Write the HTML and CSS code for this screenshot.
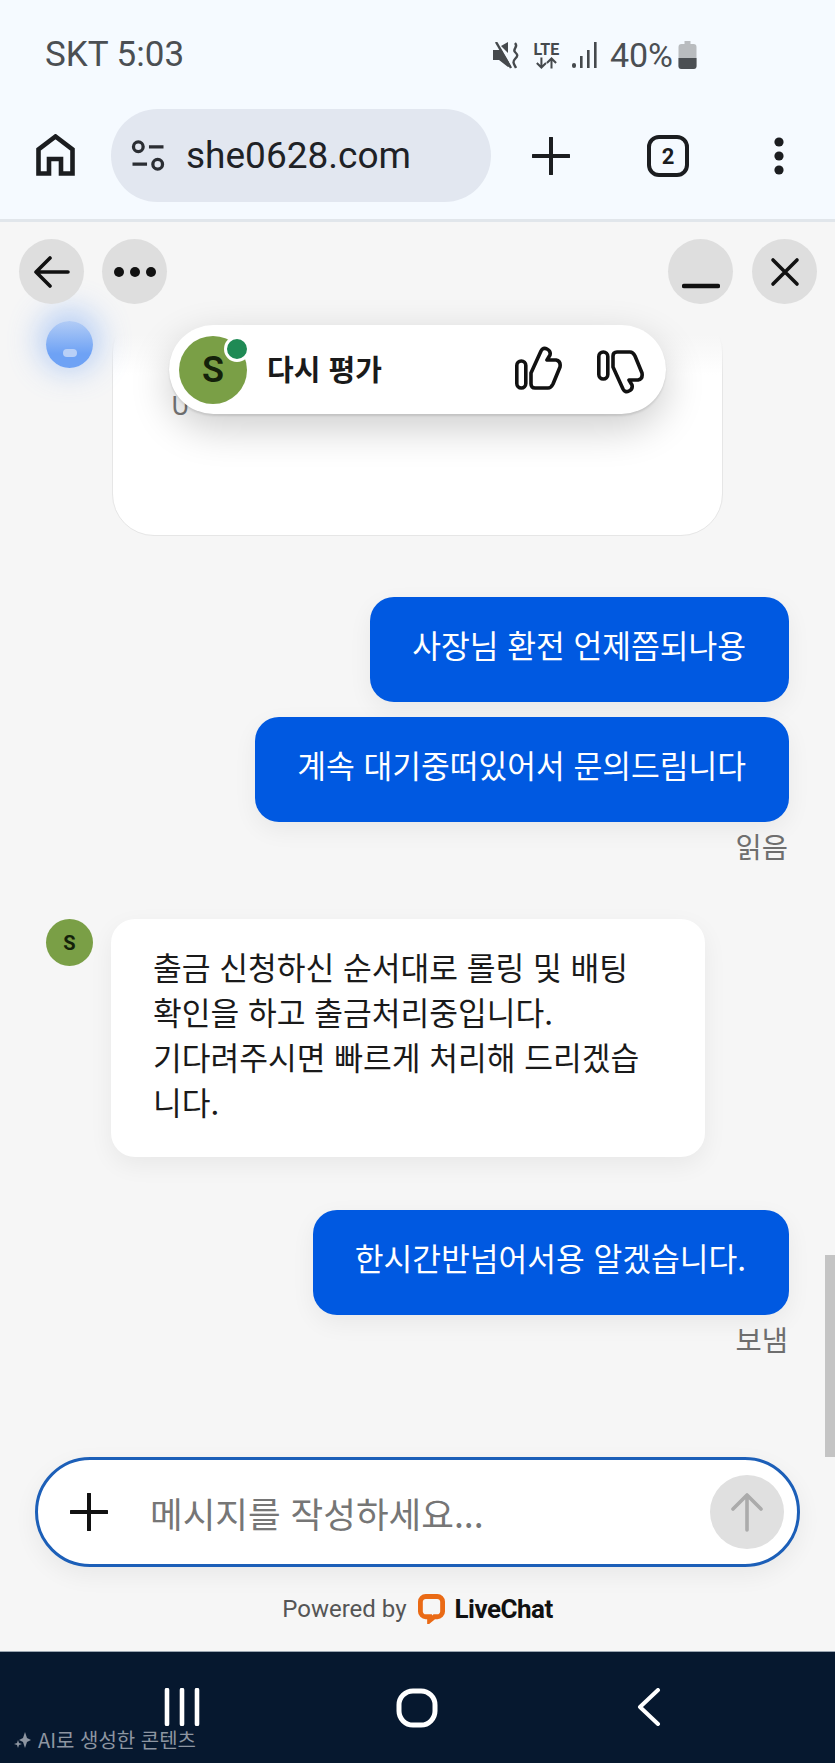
FILE: index.html
```html
<!DOCTYPE html>
<html lang="ko">
<head>
<meta charset="UTF-8">
<meta name="viewport" content="width=device-width, initial-scale=1.0">
<title>LiveChat</title>
<link rel="stylesheet" href="styles.css">
</head>
<body>

<div class="phone">
    <!-- Android status bar -->
    <header class="status-bar">
        <span class="status-left">SKT 5:03</span>
        <div class="status-right">
            <svg class="icon-mute" viewBox="0 0 27 27">
                <path d="M0 8h6l2-1 10 17-3 1-9-7H0z" fill="#45494d"/>
                <path d="M8 4l7-4v11z" fill="#45494d"/>
                <path d="M3 0l15 26" stroke="#45494d" stroke-width="2.4"/>
                <path d="M22 1c4 4-3 6 0 9s3 4 0 7-1 5 1 9" fill="none" stroke="#45494d" stroke-width="2.4"/>
            </svg>
            <div class="lte">
                <span class="lte-text">LTE</span>
                <svg viewBox="0 0 24 12" class="lte-arrows">
                    <path d="M7 0v11M2 6l5 5 5-5" fill="none" stroke="#45494d" stroke-width="2.2"/>
                    <path d="M18 12V1M13 6l5-5 5 5" fill="none" stroke="#45494d" stroke-width="2.2"/>
                </svg>
            </div>
            <svg class="icon-signal" viewBox="0 0 25 26">
                <rect x="0" y="21" width="4" height="5" rx="2" fill="#45494d"/>
                <rect x="8" y="14" width="2.6" height="12" fill="#45494d"/>
                <rect x="15" y="8" width="2.6" height="18" fill="#45494d"/>
                <rect x="22" y="0" width="2.6" height="26" fill="#45494d"/>
            </svg>
            <span class="battery-text">40%</span>
            <svg class="icon-battery" viewBox="0 0 18 28">
                <path d="M6 0h6v3h3a3 3 0 0 1 3 3v19a3 3 0 0 1-3 3H3a3 3 0 0 1-3-3V6a3 3 0 0 1 3-3h3z" fill="#b9bcbf"/>
                <path d="M0 17h18v8a3 3 0 0 1-3 3H3a3 3 0 0 1-3-3z" fill="#4b4f53"/>
            </svg>
        </div>
    </header>

    <!-- Browser toolbar -->
    <div class="browser-bar">
        <svg class="icon-home" viewBox="0 0 39 42">
            <path d="M2.5 39.5V15.5L19.5 2.5l17 13v24H25V25H13v14.5z" fill="none" stroke="#1b1d20" stroke-width="4.6"/>
        </svg>
        <div class="url-pill">
            <svg class="icon-tune" viewBox="0 0 34 32">
                <circle cx="7" cy="7" r="5" fill="none" stroke="#2b2e33" stroke-width="3.4"/>
                <path d="M18 7h15M1 25h15" stroke="#2b2e33" stroke-width="3.4"/>
                <circle cx="27" cy="25" r="5" fill="none" stroke="#2b2e33" stroke-width="3.4"/>
            </svg>
            <span class="url-text">she0628.com</span>
        </div>
        <svg class="icon-newtab" viewBox="0 0 38 38">
            <path d="M19 1v36M1 19h36" stroke="#1b1d20" stroke-width="4" stroke-linecap="round"/>
        </svg>
        <div class="tab-count">2</div>
        <svg class="icon-menu" viewBox="0 0 12 38">
            <circle cx="6" cy="5" r="4.6" fill="#1b1d20"/>
            <circle cx="6" cy="19" r="4.6" fill="#1b1d20"/>
            <circle cx="6" cy="33" r="4.6" fill="#1b1d20"/>
        </svg>
    </div>

    <!-- Chat window -->
    <main class="chat">
        <div class="chat-top">
            <div class="chat-top-group">
                <button class="round-btn">
                    <svg viewBox="0 0 36 32" class="btn-icon"><path d="M34 16H3M16 2L2 16l14 14" fill="none" stroke="#111" stroke-width="3.6" stroke-linecap="round" stroke-linejoin="round"/></svg>
                </button>
                <button class="round-btn">
                    <svg viewBox="0 0 44 12" class="btn-icon-wide"><circle cx="6" cy="6" r="5" fill="#111"/><circle cx="22" cy="6" r="5" fill="#111"/><circle cx="38" cy="6" r="5" fill="#111"/></svg>
                </button>
            </div>
            <div class="chat-top-group chat-top-right">
                <button class="round-btn">
                    <svg viewBox="0 0 38 6" class="btn-icon-min"><path d="M2 3h34" stroke="#111" stroke-width="4.4" stroke-linecap="round"/></svg>
                </button>
                <button class="round-btn">
                    <svg viewBox="0 0 30 30" class="btn-icon-x"><path d="M3 3l24 24M27 3L3 27" stroke="#111" stroke-width="3.6" stroke-linecap="round"/></svg>
                </button>
            </div>
        </div>

        <div class="top-fade"></div>

        <div class="rate-pill">
            <div class="rate-avatar">S<span class="online-dot"></span></div>
            <span class="rate-label">다시 평가</span>
            <svg class="icon-thumb" viewBox="0 0 47 44">
                <rect x="1.8" y="15" width="9" height="27" rx="4.5" fill="none" stroke="#111" stroke-width="3.6"/>
                <path d="M16 27L26 5q2-4 6-2t3 6l-3 5h9q5 1 4 7l-7 17q-2 4-5 4H20q-4 0-4-4z" fill="none" stroke="#111" stroke-width="3.6" stroke-linejoin="round"/>
            </svg>
            <svg class="icon-thumb icon-thumb-down" viewBox="0 0 47 44">
                <rect x="1.8" y="15" width="9" height="27" rx="4.5" fill="none" stroke="#111" stroke-width="3.6"/>
                <path d="M16 27L26 5q2-4 6-2t3 6l-3 5h9q5 1 4 7l-7 17q-2 4-5 4H20q-4 0-4-4z" fill="none" stroke="#111" stroke-width="3.6" stroke-linejoin="round"/>
            </svg>
        </div>

        <div class="messages">
            <div class="card-row">
                <div class="agent-glow"><span class="glow-dash"></span></div>
                <div class="card"><span class="card-text">U</span></div>
            </div>

            <div class="bubble bubble-me first">사장님 환전 언제쯤되나용</div>
            <div class="bubble bubble-me second">계속 대기중떠있어서 문의드림니다</div>
            <div class="msg-status">읽음</div>

            <div class="agent-row">
                <div class="agent-avatar">S</div>
                <div class="bubble bubble-agent">출금 신청하신 순서대로 롤링 및 배팅<br>확인을 하고 출금처리중입니다.<br>기다려주시면 빠르게 처리해 드리겠습<br>니다.</div>
            </div>

            <div class="bubble bubble-me third">한시간반넘어서용 알겠습니다.</div>
            <div class="msg-status">보냄</div>
        </div>

        <div class="scroll-thumb"></div>

        <div class="composer">
            <svg class="icon-plus" viewBox="0 0 38 38">
                <path d="M19 1v36M1 19h36" stroke="#111" stroke-width="4" stroke-linecap="round"/>
            </svg>
            <span class="placeholder">메시지를 작성하세요...</span>
            <div class="send-btn">
                <svg viewBox="0 0 34 40" class="icon-send"><path d="M17 38V3M3 17L17 3l14 14" fill="none" stroke="#ababab" stroke-width="3.6" stroke-linecap="round" stroke-linejoin="round"/></svg>
            </div>
        </div>

        <div class="powered">
            <span class="powered-by">Powered by</span>
            <svg class="lc-logo" viewBox="0 0 28 31">
                <path d="M8 2.5h12a5.500 5.500 0 0 1 5.500 5.500v10a5.500 5.500 0 0 1-5.500 5.500h-3l-5 4v-4H8a5.500 5.500 0 0 1-5.500-5.500V8A5.500 5.500 0 0 1 8 2.500z" fill="none" stroke="#ea6a15" stroke-width="5"/>
            </svg>
            <span class="lc-name">LiveChat</span>
        </div>
    </main>

    <!-- Android nav bar -->
    <footer class="nav-bar">
        <svg class="nav-recent" viewBox="0 0 36 38">
            <path d="M3 2v34M18 2v34M33 2v34" stroke="#fff" stroke-width="4.6" stroke-linecap="round"/>
        </svg>
        <svg class="nav-home" viewBox="0 0 42 40">
            <rect x="3" y="3" width="36" height="34" rx="14" fill="none" stroke="#fff" stroke-width="5"/>
        </svg>
        <svg class="nav-back" viewBox="0 0 24 38">
            <path d="M21 2L3 19l18 17" fill="none" stroke="#fff" stroke-width="4" stroke-linecap="round" stroke-linejoin="round"/>
        </svg>
        <div class="ai-note">
            <svg class="icon-spark" viewBox="0 0 18 18">
                <path d="M11 1l2 6 4 2-4 2-2 6-2-6-4-2 4-2zM4 9l1 3 3 1-3 1-1 3-1-3-3-1 3-1z" fill="#8d95a1"/>
            </svg>
            AI로 생성한 콘텐츠
        </div>
    </footer>
</div>

</body>
</html>
```

FILE: styles.css
```css
* {
    box-sizing: border-box;
}

body {
    margin: 0;
    padding: 0;
    font-family: Roboto, "Noto Sans CJK KR", sans-serif;
    background-color: #f6f6f6;
}

.phone {
    width: 835px;
    height: 1763px;
    display: flex;
    flex-direction: column;
    overflow: hidden;
}

/* Status bar */
.status-bar {
    height: 109px;
    flex: none;
    background-color: #f5faff;
    display: flex;
    justify-content: space-between;
    align-items: flex-start;
    padding: 35px 0 0 45px;
    color: #4b4f53;
    font-size: 35px;
}

.status-left {
    line-height: 40px;
}

.status-right {
    display: flex;
    align-items: center;
    height: 40px;
    padding-right: 138px;
}

.icon-mute {
    width: 27px;
    height: 27px;
    margin-right: 13px;
}

.lte {
    width: 27px;
    display: flex;
    flex-direction: column;
    align-items: center;
    margin-right: 12px;
}

.lte-text {
    font-size: 16px;
    line-height: 15px;
    font-weight: 700;
    color: #45494d;
}

.lte-arrows {
    width: 22px;
    height: 12px;
}

.icon-signal {
    width: 25px;
    height: 26px;
    margin-right: 13px;
}

.battery-text {
    font-size: 34px;
    line-height: 40px;
}

.icon-battery {
    width: 19px;
    height: 28px;
    margin-left: 5px;
}

/* Browser toolbar */
.browser-bar {
    height: 113px;
    flex: none;
    background-color: #f5faff;
    border-bottom: 3px solid #e1e6eb;
    display: flex;
    align-items: flex-start;
    position: relative;
    padding-left: 36px;
}

.icon-home {
    width: 39px;
    height: 42px;
    margin-top: 25px;
}

.url-pill {
    width: 380px;
    height: 93px;
    margin-left: 36px;
    background-color: #e2e7f0;
    border-radius: 47px;
    display: flex;
    align-items: center;
    padding-left: 20px;
}

.icon-tune {
    width: 34px;
    height: 31px;
    margin-right: 21px;
}

.url-text {
    font-size: 37px;
    color: #1f2226;
}

.icon-newtab {
    width: 38px;
    height: 38px;
    margin: 28px 0 0 41px;
}

.tab-count {
    width: 42px;
    height: 42px;
    margin: 26px 0 0 77px;
    border: 4px solid #1b1d20;
    border-radius: 12px;
    font-size: 22px;
    font-weight: 700;
    color: #1b1d20;
    display: flex;
    align-items: center;
    justify-content: center;
}

.icon-menu {
    width: 12px;
    height: 38px;
    margin: 28px 0 0 84px;
}

/* Chat area */
.chat {
    flex: 1;
    position: relative;
    background-color: #f6f6f6;
    display: flex;
    flex-direction: column;
    overflow: hidden;
}

.chat-top {
    position: absolute;
    top: 17px;
    left: 19px;
    right: 18px;
    display: flex;
    justify-content: space-between;
    z-index: 3;
}

.chat-top-group {
    display: flex;
    gap: 18px;
}

.chat-top-right {
    gap: 19px;
}

.round-btn {
    width: 65px;
    height: 65px;
    border: none;
    padding: 0;
    border-radius: 50%;
    background-color: #dedede;
    display: flex;
    align-items: center;
    justify-content: center;
}

.btn-icon {
    width: 36px;
    height: 32px;
}

.btn-icon-wide {
    width: 44px;
    height: 12px;
}

.btn-icon-min {
    width: 38px;
    height: 6px;
    margin-top: 28px;
}

.btn-icon-x {
    width: 30px;
    height: 30px;
}

.top-fade {
    position: absolute;
    top: 0;
    left: 0;
    right: 0;
    height: 153px;
    background: linear-gradient(to bottom, #f6f6f6 74%, rgba(246, 246, 246, 0));
    z-index: 1;
}

.rate-pill {
    position: absolute;
    top: 103px;
    left: 169px;
    width: 497px;
    height: 89px;
    background-color: #fff;
    border-radius: 45px;
    box-shadow: 0 14px 40px rgba(0, 0, 0, 0.2), 0 2px 2px rgba(0, 0, 0, 0.1);
    display: flex;
    align-items: center;
    padding-left: 10px;
    z-index: 2;
}

.rate-avatar {
    width: 68px;
    height: 68px;
    border-radius: 50%;
    background-color: #7a9f46;
    color: #14210a;
    font-size: 36px;
    font-weight: 600;
    display: flex;
    align-items: center;
    justify-content: center;
    position: relative;
    flex: none;
}

.online-dot {
    position: absolute;
    top: 0;
    right: -3px;
    width: 26px;
    height: 26px;
    border-radius: 50%;
    background-color: #1f8a55;
    border: 3px solid #fff;
}

.rate-label {
    font-family: "Noto Sans CJK KR", sans-serif;
    font-size: 29px;
    font-weight: 700;
    color: #1a1a1a;
    margin-left: 20px;
    margin-top: -3px;
    flex: 1;
}

.icon-thumb {
    width: 47px;
    height: 44px;
    margin-top: -3px;
    margin-right: 35px;
}

.icon-thumb-down {
    transform: scaleY(-1);
    margin-top: 5px;
    margin-right: 22px;
}

.messages {
    flex: 1;
    display: flex;
    flex-direction: column;
    align-items: flex-end;
    padding-right: 46px;
    font-family: "Noto Sans CJK KR", sans-serif;
}

.card-row {
    align-self: flex-start;
    display: flex;
    margin-left: 46px;
    padding-top: 88px;
}

.agent-glow {
    width: 47px;
    height: 47px;
    margin-top: 11px;
    border-radius: 50%;
    background: linear-gradient(to bottom, rgba(110, 162, 245, 0.5), #6ea2f5 70%);
    box-shadow: 0 -4px 30px 8px rgba(110, 162, 245, 0.45);
    display: flex;
    align-items: center;
    justify-content: center;
    flex: none;
    position: relative;
    z-index: 2;
}

.glow-dash {
    width: 14px;
    height: 8px;
    border-radius: 4px;
    background-color: #b9d0f7;
    margin-top: 16px;
}

.card {
    width: 611px;
    height: 226px;
    margin-left: 19px;
    padding: 78px 0 0 58px;
    background-color: #fff;
    border: 1px solid #e6e6e6;
    border-radius: 42px;
}

.card-text {
    font-size: 26px;
    line-height: 30px;
    color: #777;
}

.bubble {
    font-size: 31.25px;
    line-height: 45px;
    border-radius: 24px;
    box-shadow: 0 8px 24px rgba(0, 0, 0, 0.06);
}

.bubble-me {
    background-color: #0059e1;
    color: #fff;
    padding: 25px 43px 35px 42px;
    white-space: nowrap;
}

.first {
    margin-top: 61px;
}

.second {
    margin-top: 15px;
}

.third {
    margin-top: 53px;
}

.msg-status {
    font-size: 28.5px;
    line-height: 38px;
    color: #6e6e6e;
    margin-top: 5px;
    padding-right: 1px;
}

.agent-row {
    align-self: flex-start;
    display: flex;
    margin-left: 46px;
    margin-top: 54px;
}

.agent-avatar {
    width: 47px;
    height: 47px;
    border-radius: 50%;
    background-color: #7a9f46;
    color: #14210a;
    font-family: Roboto, sans-serif;
    font-size: 20px;
    font-weight: 700;
    display: flex;
    align-items: center;
    justify-content: center;
    flex: none;
}

.bubble-agent {
    width: 594px;
    margin-left: 18px;
    padding: 25px 42px 33px;
    background-color: #fff;
    color: #1a1a1a;
    white-space: nowrap;
}

.scroll-thumb {
    position: absolute;
    top: 1033px;
    right: 0;
    width: 10px;
    height: 202px;
    background-color: #c4c4c4;
}

.composer {
    flex: none;
    width: 765px;
    height: 110px;
    margin-left: 35px;
    background-color: #fff;
    border: 3px solid #1c5fb8;
    border-radius: 55px;
    box-shadow: 0 8px 24px rgba(0, 0, 0, 0.06);
    display: flex;
    align-items: center;
    padding-left: 32px;
}

.icon-plus {
    width: 38px;
    height: 38px;
}

.placeholder {
    font-family: "Noto Sans CJK KR", sans-serif;
    font-size: 35.5px;
    color: #767676;
    margin-left: 42px;
    flex: 1;
}

.send-btn {
    width: 74px;
    height: 74px;
    border-radius: 50%;
    background-color: #e0e0e0;
    display: flex;
    align-items: center;
    justify-content: center;
    margin-right: 13px;
}

.icon-send {
    width: 34px;
    height: 40px;
}

.powered {
    flex: none;
    height: 84px;
    display: flex;
    align-items: center;
    justify-content: center;
    color: #555;
}

.powered-by {
    font-size: 24px;
    margin-right: 12px;
}

.lc-logo {
    width: 27px;
    height: 30px;
    margin-right: 9px;
}

.lc-name {
    font-size: 26px;
    font-weight: 700;
    color: #111;
    letter-spacing: -0.5px;
}

/* Android nav bar */
.nav-bar {
    height: 112px;
    flex: none;
    background-color: #06182f;
    border-top: 1px solid #9aa5b1;
    position: relative;
    display: flex;
    align-items: flex-start;
    padding-top: 36px;
    padding-left: 164px;
}

.nav-recent {
    width: 36px;
    height: 38px;
}

.nav-home {
    width: 42px;
    height: 40px;
    margin-left: 196px;
}

.nav-back {
    width: 24px;
    height: 38px;
    margin-left: 199px;
}

.ai-note {
    position: absolute;
    left: 14px;
    bottom: 9px;
    display: flex;
    align-items: center;
    gap: 6px;
    font-family: "Noto Sans CJK KR", sans-serif;
    font-size: 20px;
    color: #8d95a1;
}

.icon-spark {
    width: 18px;
    height: 18px;
}
```
